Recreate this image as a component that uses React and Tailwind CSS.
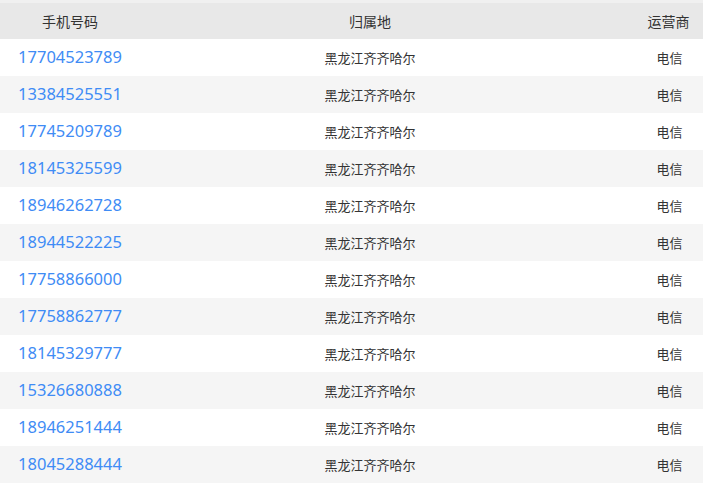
import React from 'react';

const phones = [
  '17704523789',
  '13384525551',
  '17745209789',
  '18145325599',
  '18946262728',
  '18944522225',
  '17758866000',
  '17758862777',
  '18145329777',
  '15326680888',
  '18946251444',
  '18045288444',
];

const cjk = { fontFamily: '"Noto Sans CJK SC", "Noto Sans", sans-serif' };

const App = () => {
  return (
    <div className="w-[703px] h-[483px] overflow-hidden bg-[#f0f0f0] pt-[3px] text-[#333]" style={cjk}>
      {/* Header */}
      <div className="flex h-[36px] items-center bg-[#e8e8e8] text-[14px]">
        <div className="w-[140px] text-center">手机号码</div>
        <div className="w-[460px] text-center">归属地</div>
        <div className="w-[103px] pl-[34px] text-center">运营商</div>
      </div>

      {phones.map((phone, i) => (
        <div
          key={phone}
          className={`flex h-[37px] items-center ${i % 2 === 0 ? 'bg-white' : 'bg-[#f5f5f5]'}`}
        >
          <div className="w-[140px] text-center text-[16.5px] text-[#3f8cf5]" style={{ fontFamily: '"Noto Sans", sans-serif' }}>
            {phone}
          </div>
          <div className="w-[460px] text-center text-[13px]">黑龙江齐齐哈尔</div>
          <div className="w-[103px] pl-[36px] text-center text-[13px]">电信</div>
        </div>
      ))}
    </div>
  );
};

export default App;
